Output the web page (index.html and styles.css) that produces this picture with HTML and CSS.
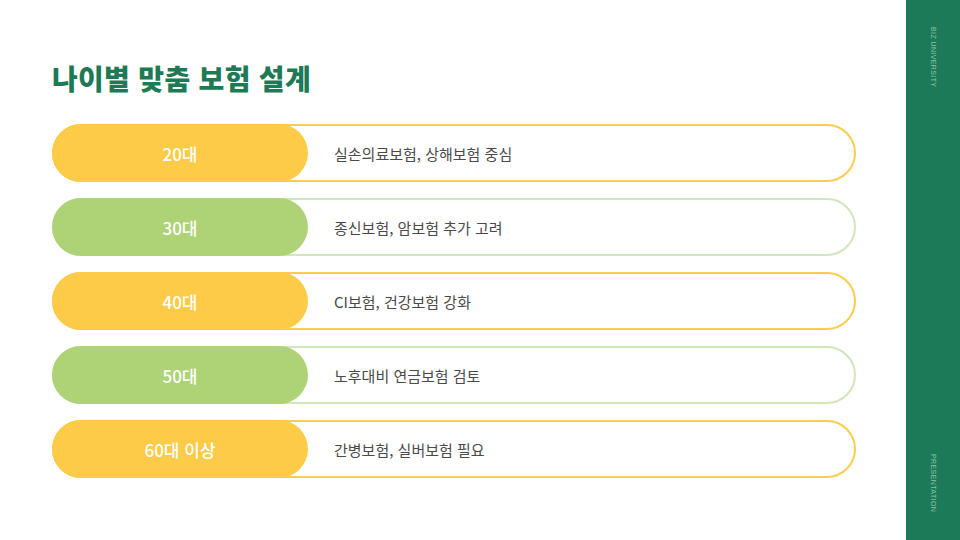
FILE: index.html
```html
<!DOCTYPE html>
<html lang="ko">
<head>
    <meta charset="UTF-8">
    <meta name="viewport" content="width=device-width, initial-scale=1.0">
    <title>나이별 맞춤 보험 설계</title>
    <link rel="stylesheet" href="styles.css">
</head>
<body>

<div class="slide">
    <div class="content">
        <h1>나이별 맞춤 보험 설계</h1>

        <div class="rows">
            <div class="row yellow">
                <div class="age">20대</div>
                <div class="desc">실손의료보험, 상해보험 중심</div>
            </div>
            <div class="row green">
                <div class="age">30대</div>
                <div class="desc">종신보험, 암보험 추가 고려</div>
            </div>
            <div class="row yellow">
                <div class="age">40대</div>
                <div class="desc">CI보험, 건강보험 강화</div>
            </div>
            <div class="row green">
                <div class="age">50대</div>
                <div class="desc">노후대비 연금보험 검토</div>
            </div>
            <div class="row yellow">
                <div class="age">60대 이상</div>
                <div class="desc">간병보험, 실버보험 필요</div>
            </div>
        </div>
    </div>

    <!-- side bar -->
    <div class="sidebar">
        <span>BIZ UNIVERSITY</span>
        <span>PRESENTATION</span>
    </div>
</div>

</body>
</html>
```

FILE: styles.css
```css
body {
    margin: 0;
    font-family: "Noto Sans CJK KR", "Noto Sans", sans-serif;
    background-color: #fff;
    color: #333;
}

.slide {
    display: flex;
    width: 960px;
    height: 540px;
    overflow: hidden;
}

.content {
    flex: 1;
    padding: 0 50px 0 52px;
}

h1 {
    margin: 58px 0 26px;
    font-size: 28px;
    font-weight: 900;
    line-height: 40px;
    color: #1d7a55;
    letter-spacing: 0.3px;
}

.rows {
    display: flex;
    flex-direction: column;
    gap: 16px;
}

.row {
    display: flex;
    align-items: center;
    height: 54px;
    border: 2px solid;
    border-radius: 29px;
}

.row.yellow {
    border-color: #fbcd4f;
}

.row.green {
    border-color: #d3e5bb;
}

.age {
    width: 256px;
    height: 58px;
    margin: -2px 0 -2px -2px;
    border-radius: 29px;
    display: flex;
    align-items: center;
    justify-content: center;
    color: #fff;
    font-size: 17px;
    font-weight: 500;
}

.yellow .age {
    background-color: #fecb48;
}

.green .age {
    background-color: #aed276;
}

.desc {
    margin-left: 26px;
    font-size: 15px;
    color: #4a4a4a;
}

.sidebar {
    width: 54px;
    background-color: #1d7a58;
    display: flex;
    flex-direction: column;
    justify-content: space-between;
    align-items: center;
    padding: 27px 0 28px;
    box-sizing: border-box;
}

.sidebar span {
    writing-mode: vertical-rl;
    font-family: "Liberation Sans", Arial, sans-serif;
    font-size: 7px;
    letter-spacing: 0.4px;
    color: #8fc4a8;
}
```
